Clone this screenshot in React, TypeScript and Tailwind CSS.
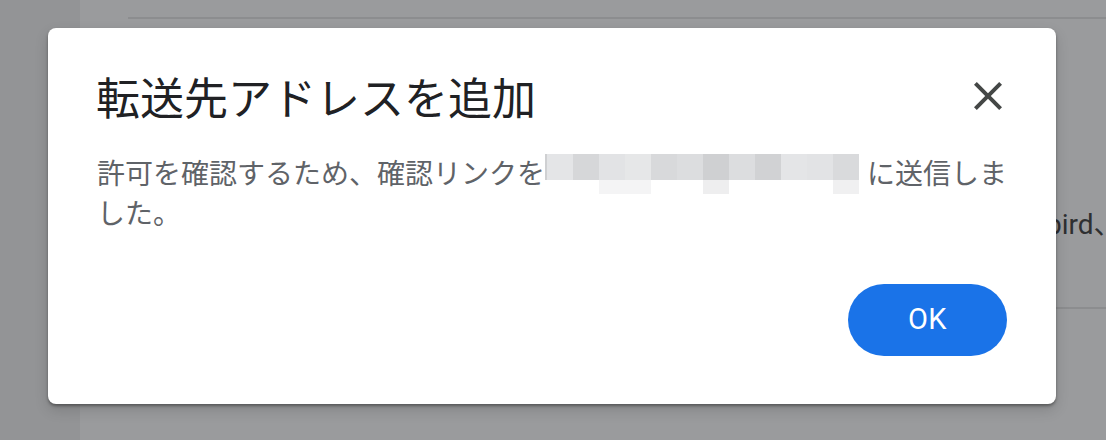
const tiles = [
  "#e4e5e7",
  "#d6d7d9",
  "#e2e3e5",
  "#e6e7e8",
  "#d8d9db",
  "#dcdddf",
  "#cfd0d2",
  "#dcdddf",
  "#d1d2d4",
  "#e4e5e7",
  "#e2e3e5",
  "#d9dadc",
];

const lower = [null, null, "#f4f4f5", "#f4f4f5", null, null, "#eeeeef", null, null, null, null, "#f0f0f1"];

function Redacted() {
  return (
    <div className="mt-[2px] flex w-[314px] shrink-0 flex-col self-start">
      <div className="flex h-[26px]">
        <div className="w-[2px] bg-[#cfd0d2]" />
        {tiles.map((c, i) => (
          <div key={i} className="w-[26px]" style={{ backgroundColor: c }} />
        ))}
      </div>
      <div className="flex h-[14px] pl-[2px]">
        {lower.map((c, i) => (
          <div key={i} className="w-[26px]" style={{ backgroundColor: c ?? "transparent" }} />
        ))}
      </div>
    </div>
  );
}

function CloseIcon() {
  return (
    <svg viewBox="0 0 24 24" className="h-[48px] w-[48px]" fill="#444746">
      <path d="M19 6.41L17.59 5 12 10.59 6.41 5 5 6.41 10.59 12 5 17.59 6.41 19 12 13.41 17.59 19 19 17.59 13.41 12z" />
    </svg>
  );
}

export default function App() {
  return (
    <div className="relative flex h-[440px] w-full overflow-hidden bg-[#9a9b9d] font-['Roboto','Noto_Sans_CJK_JP',sans-serif]">
      {/* dimmed page behind the dialog */}
      <div className="w-[80px] shrink-0 bg-[#939496]" />
      <div className="flex min-w-0 flex-1 flex-col">
        <div className="ml-[48px] mt-[17px] h-[2px] bg-[#8c8d8f]" />
        <div className="mt-[186px] h-[40px] whitespace-nowrap pl-[966px] text-[28px] leading-[40px] text-[#2e2f31]">
          bird、
        </div>
        <div className="ml-[48px] mt-[62px] h-[2px] bg-[#8c8d8f]" />
      </div>

      {/* dialog */}
      <div className="absolute left-[48px] top-[28px] flex h-[376px] w-[1008px] flex-col rounded-[8px] bg-white shadow-[0_2px_3px_rgba(0,0,0,0.35),0_6px_14px_rgba(0,0,0,0.15)]">
        <div className="flex items-start justify-between pl-[48px] pr-[44px] pt-[44px]">
          <h2 className="font-['Noto_Sans_CJK_JP',sans-serif] text-[44px] font-normal leading-[48px] text-[#202124]">
            転送先アドレスを追加
          </h2>
          <button aria-label="閉じる" className="grid h-[48px] w-[48px] place-items-center">
            <CloseIcon />
          </button>
        </div>

        <div className="mt-[32px] pl-[49px] font-['Noto_Sans_CJK_JP',sans-serif] text-[28px] leading-[40px] text-[#5f6368]">
          <div className="flex h-[40px] items-start whitespace-nowrap">
            <span>許可を確認するため、確認リンクを</span>
            <Redacted />
            <span className="ml-[8px]">に送信しま</span>
          </div>
          <div>した。</div>
        </div>

        <div className="mt-auto flex justify-end pb-[48px] pr-[49px]">
          <button className="h-[72px] w-[159px] rounded-full bg-[#1a73e8] font-['Roboto',sans-serif] text-[29px] font-normal tracking-[0.5px] text-white">
            OK
          </button>
        </div>
      </div>
    </div>
  );
}
